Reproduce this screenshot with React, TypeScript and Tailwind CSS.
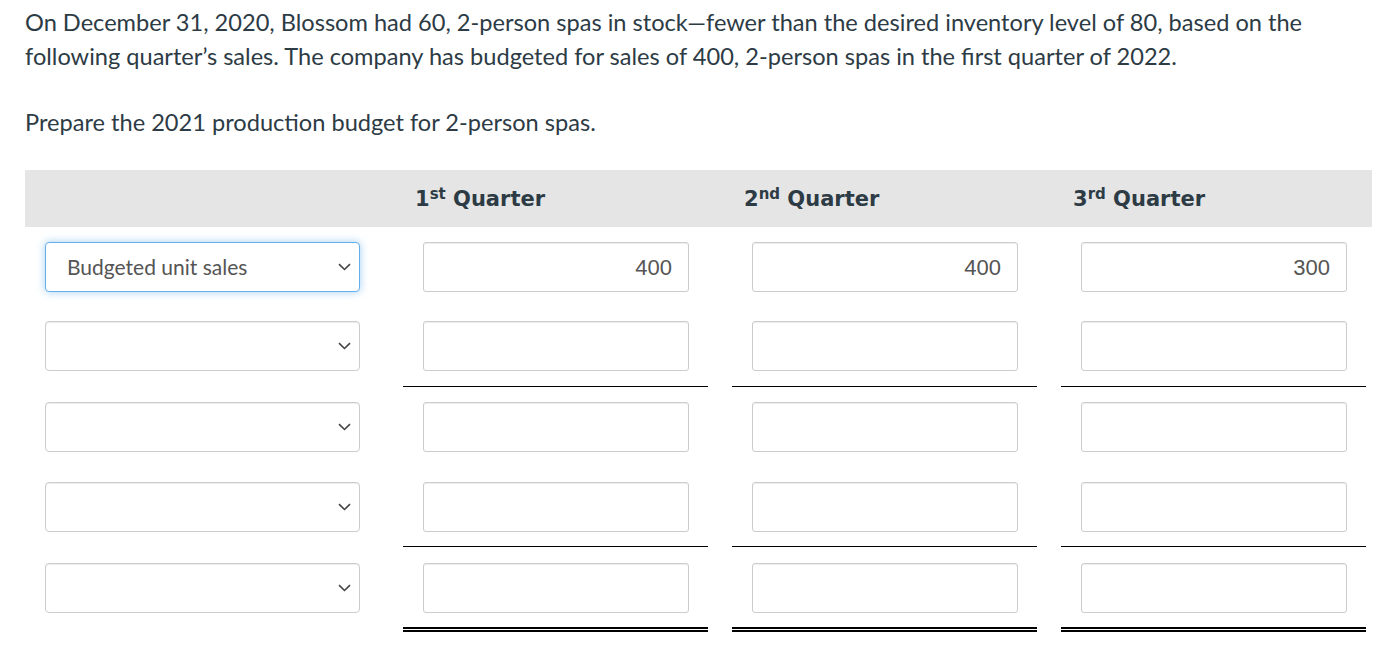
import React from "react";

const QUARTERS = [
  { n: "1", sup: "st" },
  { n: "2", sup: "nd" },
  { n: "3", sup: "rd" },
];

const ROWS = [
  { label: "Budgeted unit sales", values: ["400", "400", "300"], line: "", focus: true, pad: "pt-[15px] pb-[14px]" },
  { label: "", values: ["", "", ""], line: "border-b border-black", focus: false, pad: "pt-[15px] pb-[15px]" },
  { label: "", values: ["", "", ""], line: "", focus: false, pad: "pt-[15px] pb-[15px]" },
  { label: "", values: ["", "", ""], line: "border-b border-black", focus: false, pad: "pt-[15px] pb-[14px]" },
  { label: "", values: ["", "", ""], line: "border-b-[5px] border-double border-black", focus: false, pad: "pt-[16px] pb-[14px]" },
];

function Chevron() {
  return (
    <svg width="13" height="8" viewBox="0 0 13 8" className="shrink-0">
      <path d="M1 1.2 L6.5 6.5 L12 1.2" fill="none" stroke="#444" strokeWidth="1.6" />
    </svg>
  );
}

function Select({ label, focus }: { label: string; focus: boolean }) {
  return (
    <div
      className={
        "flex h-[50px] w-[315px] items-center justify-between rounded-[4px] border bg-white pl-[21px] pr-[8px] text-[21px] text-[#555] " +
        (focus
          ? "border-[#66afe9] shadow-[0_0_8px_rgba(102,175,233,0.6)]"
          : "border-[#ccc] shadow-[inset_0_1px_1px_rgba(0,0,0,0.075)]")
      }
    >
      <span>{label}</span>
      <Chevron />
    </div>
  );
}

export default function App() {
  return (
    <div className="min-h-[648px] bg-white font-['Lato',sans-serif] text-[#2d3b45]">
      <div className="px-[25px] pt-[5px]">
        <p className="w-[1347px] text-[23.6px] leading-[34px]">
          On December 31, 2020, Blossom had 60, 2-person spas in stock—fewer than the desired inventory level of 80, based on the following quarter’s sales. The company has budgeted for sales of 400, 2-person spas in the first quarter of 2022.
        </p>
        <p className="mt-[32px] text-[23.6px] leading-[34px]">Prepare the 2021 production budget for 2-person spas.</p>

        <div className="mt-[31px]">
          <div className="flex h-[57px] w-[1347px] items-center overflow-hidden bg-[#e5e5e5] pt-[3px]">
            <div className="w-[366px] shrink-0" />
            {QUARTERS.map((q) => (
              <div key={q.n} className="w-[329px] shrink-0 pl-[24px] font-['DejaVu_Sans',sans-serif] text-[21px] font-bold">
                {q.n}
                <sup className="text-[15px]">{q.sup}</sup> Quarter
              </div>
            ))}
          </div>

          {ROWS.map((r, i) => (
            <div key={i} className="flex items-start">
              <div className={"w-[366px] shrink-0 pl-[20px] " + r.pad}>
                <Select label={r.label} focus={r.focus} />
              </div>
              {r.values.map((v, j) => (
                <div key={j} className="w-[329px] shrink-0 px-[12px]">
                  <div className={"px-[20px] " + r.pad + " " + r.line}>
                    <div className="flex h-[50px] w-[266px] items-center justify-end rounded-[3px] border border-[#ccc] bg-white pr-[16px] font-['Liberation_Sans',sans-serif] text-[22px] text-[#555] shadow-[inset_0_1px_1px_rgba(0,0,0,0.075)]">
                      {v}
                    </div>
                  </div>
                </div>
              ))}
            </div>
          ))}
        </div>
      </div>
    </div>
  );
}
